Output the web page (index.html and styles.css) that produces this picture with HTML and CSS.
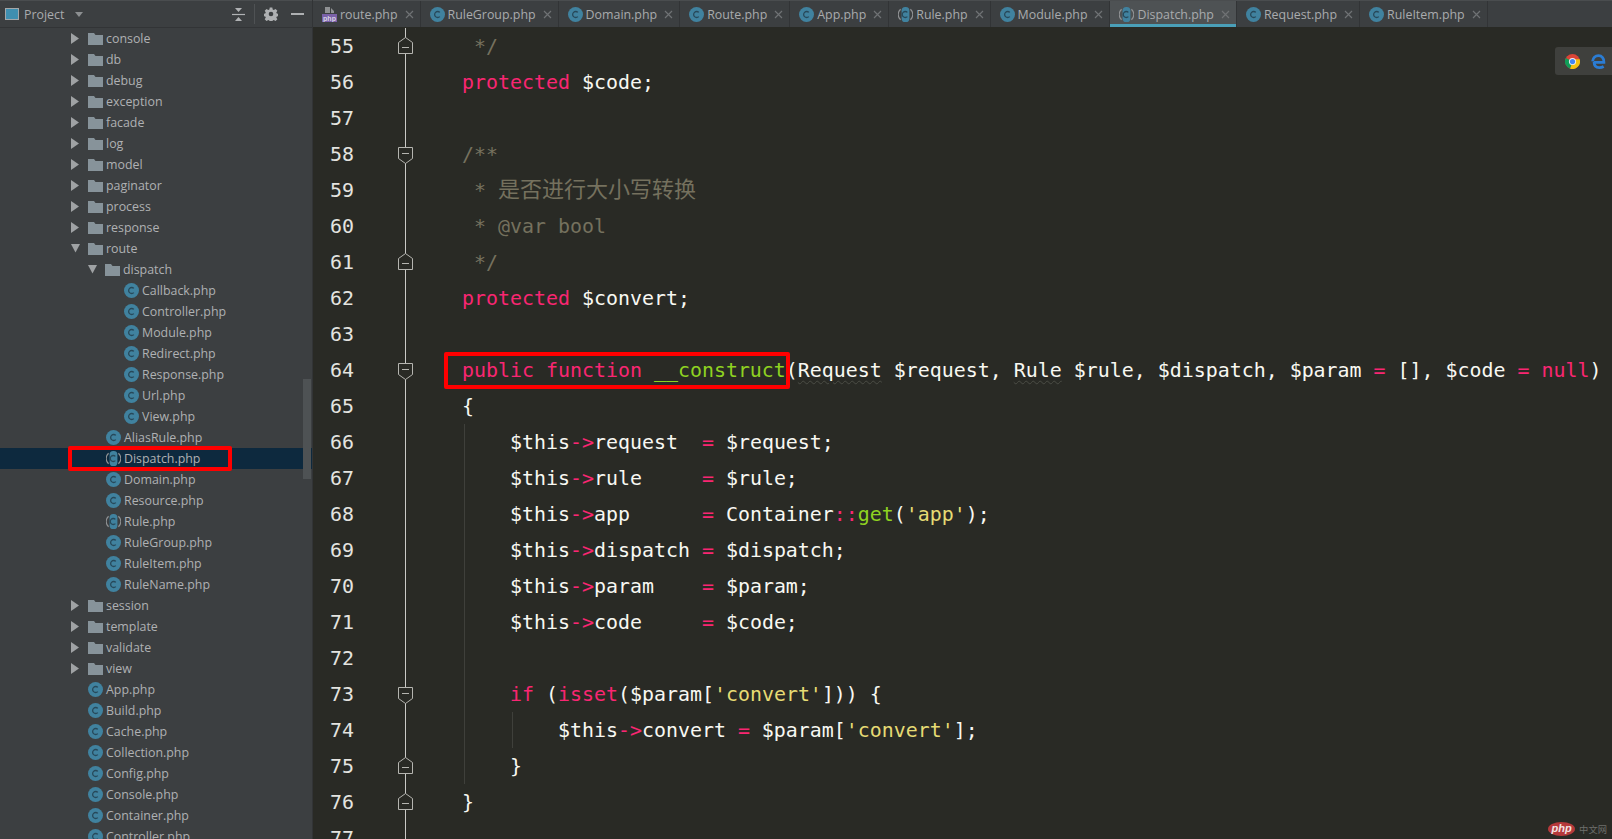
FILE: index.html
```html
<!DOCTYPE html>
<html lang="en">
<head>
<meta charset="utf-8">
<title>Dispatch.php</title>
<link rel="stylesheet" href="styles.css">
</head>
<body>
<svg class="defs" width="0" height="0" aria-hidden="true">
  <symbol id="i-c" viewBox="0 0 15 15"><circle cx="7.5" cy="7.5" r="7.5" fill="#40829f"/><path d="M9.8 5.4A3 3 0 1 0 9.8 9.6" fill="none" stroke="#27495a" stroke-width="1.3"/></symbol>
  <symbol id="i-a" viewBox="0 0 15 15"><path d="M2.6 2.2A7 7 0 0 0 2.6 12.8" fill="none" stroke="#8f9193" stroke-width="1.2"/><path d="M12.4 2.2A7 7 0 0 1 12.4 12.8" fill="none" stroke="#8f9193" stroke-width="1.2"/><rect x="3.6" y="0" width="7.8" height="15" rx="3.6" fill="#40829f"/><path d="M9.4 5.4A3 3 0 1 0 9.4 9.6" fill="none" stroke="#27495a" stroke-width="1.3"/></symbol>
  <symbol id="i-f" viewBox="0 0 15 13"><path d="M0 1h6l1.5 2H15v10H0z" fill="#87939a"/></symbol>
  <symbol id="i-r" viewBox="0 0 9 11"><path d="M0 0l8 5.5L0 11z" fill="#9fa2a4"/></symbol>
  <symbol id="i-d" viewBox="0 0 9 9"><path d="M0 0h9L4.5 8.5z" fill="#9fa2a4"/></symbol>
  <symbol id="i-up" viewBox="0 0 15 17"><path d="M.5 16.5V5.5L7.5.5l7 5v11z" fill="#292a25" stroke="#b5b5b0"/><path d="M4 10.5h7" stroke="#b5b5b0"/></symbol>
  <symbol id="i-dn" viewBox="0 0 15 17"><path d="M.5.5v11l7 5 7-5V.5z" fill="#292a25" stroke="#b5b5b0"/><path d="M4 6.5h7" stroke="#b5b5b0"/></symbol>
  <symbol id="i-x" viewBox="0 0 9 9"><path d="M1 1l7 7M8 1L1 8" stroke="#6f7274" stroke-width="1.2"/></symbol>
</svg>
<div class="ide">
  <aside class="project">
    <header class="project-bar">
      <svg class="pi-window" viewBox="0 0 14 12"><rect x=".5" y=".5" width="13" height="11" fill="#3f8fb0" stroke="#a4a7a9"/></svg>
      <span class="project-title">Project</span>
      <svg class="pi-caret" viewBox="0 0 8 5"><path d="M0 0h8L4 5z" fill="#8c8f91"/></svg>
      <span class="spacer"></span>
      <svg class="pi-collapse" viewBox="0 0 13 13"><path d="M0 6.5h13" stroke="#b0b2b4" stroke-width="1.2"/><path d="M3 0h7L6.5 4zM3 13h7L6.5 9z" fill="#b0b2b4"/></svg>
      <span class="pi-sep"></span>
      <svg class="pi-gear" viewBox="0 0 14 14"><path d="M5.6 0h2.8l.4 2 1.2.6L11.900 1.400l2 2-1.200 1.800.6 1.200 2 .4v2.400l-2 .4-.6 1.200 1.200 1.800-2 2-1.900-1.200-1.200.6-.4 2H5.600l-.4-2-1.200-.6-1.900 1.200-2-2 1.200-1.800-.6-1.200-2-.4V6.800l2-.4.6-1.200L.1 3.400l2-2L4 2.600l1.200-.6z" fill="#aeb0b2" transform="translate(.6 .6) scale(.92)"/><circle cx="7" cy="7" r="2.300" fill="#3c3f41"/></svg>
      <svg class="pi-min" viewBox="0 0 13 2"><rect width="13" height="2" fill="#aeb0b2"/></svg>
    </header>
    <ul class="tree">
      <li class="row d1"><svg class="tw"><use href="#i-r"/></svg><svg class="ic"><use href="#i-f"/></svg><span>console</span></li>
      <li class="row d1"><svg class="tw"><use href="#i-r"/></svg><svg class="ic"><use href="#i-f"/></svg><span>db</span></li>
      <li class="row d1"><svg class="tw"><use href="#i-r"/></svg><svg class="ic"><use href="#i-f"/></svg><span>debug</span></li>
      <li class="row d1"><svg class="tw"><use href="#i-r"/></svg><svg class="ic"><use href="#i-f"/></svg><span>exception</span></li>
      <li class="row d1"><svg class="tw"><use href="#i-r"/></svg><svg class="ic"><use href="#i-f"/></svg><span>facade</span></li>
      <li class="row d1"><svg class="tw"><use href="#i-r"/></svg><svg class="ic"><use href="#i-f"/></svg><span>log</span></li>
      <li class="row d1"><svg class="tw"><use href="#i-r"/></svg><svg class="ic"><use href="#i-f"/></svg><span>model</span></li>
      <li class="row d1"><svg class="tw"><use href="#i-r"/></svg><svg class="ic"><use href="#i-f"/></svg><span>paginator</span></li>
      <li class="row d1"><svg class="tw"><use href="#i-r"/></svg><svg class="ic"><use href="#i-f"/></svg><span>process</span></li>
      <li class="row d1"><svg class="tw"><use href="#i-r"/></svg><svg class="ic"><use href="#i-f"/></svg><span>response</span></li>
      <li class="row d1"><svg class="tw"><use href="#i-d"/></svg><svg class="ic"><use href="#i-f"/></svg><span>route</span></li>
      <li class="row d2"><svg class="tw"><use href="#i-d"/></svg><svg class="ic"><use href="#i-f"/></svg><span>dispatch</span></li>
      <li class="row d3"><svg class="ic"><use href="#i-c"/></svg><span>Callback.php</span></li>
      <li class="row d3"><svg class="ic"><use href="#i-c"/></svg><span>Controller.php</span></li>
      <li class="row d3"><svg class="ic"><use href="#i-c"/></svg><span>Module.php</span></li>
      <li class="row d3"><svg class="ic"><use href="#i-c"/></svg><span>Redirect.php</span></li>
      <li class="row d3"><svg class="ic"><use href="#i-c"/></svg><span>Response.php</span></li>
      <li class="row d3"><svg class="ic"><use href="#i-c"/></svg><span>Url.php</span></li>
      <li class="row d3"><svg class="ic"><use href="#i-c"/></svg><span>View.php</span></li>
      <li class="row d2f"><svg class="ic"><use href="#i-c"/></svg><span>AliasRule.php</span></li>
      <li class="row d2f selected"><svg class="ic"><use href="#i-a"/></svg><span>Dispatch.php</span></li>
      <li class="row d2f"><svg class="ic"><use href="#i-c"/></svg><span>Domain.php</span></li>
      <li class="row d2f"><svg class="ic"><use href="#i-c"/></svg><span>Resource.php</span></li>
      <li class="row d2f"><svg class="ic"><use href="#i-a"/></svg><span>Rule.php</span></li>
      <li class="row d2f"><svg class="ic"><use href="#i-c"/></svg><span>RuleGroup.php</span></li>
      <li class="row d2f"><svg class="ic"><use href="#i-c"/></svg><span>RuleItem.php</span></li>
      <li class="row d2f"><svg class="ic"><use href="#i-c"/></svg><span>RuleName.php</span></li>
      <li class="row d1"><svg class="tw"><use href="#i-r"/></svg><svg class="ic"><use href="#i-f"/></svg><span>session</span></li>
      <li class="row d1"><svg class="tw"><use href="#i-r"/></svg><svg class="ic"><use href="#i-f"/></svg><span>template</span></li>
      <li class="row d1"><svg class="tw"><use href="#i-r"/></svg><svg class="ic"><use href="#i-f"/></svg><span>validate</span></li>
      <li class="row d1"><svg class="tw"><use href="#i-r"/></svg><svg class="ic"><use href="#i-f"/></svg><span>view</span></li>
      <li class="row d1f"><svg class="ic"><use href="#i-c"/></svg><span>App.php</span></li>
      <li class="row d1f"><svg class="ic"><use href="#i-c"/></svg><span>Build.php</span></li>
      <li class="row d1f"><svg class="ic"><use href="#i-c"/></svg><span>Cache.php</span></li>
      <li class="row d1f"><svg class="ic"><use href="#i-c"/></svg><span>Collection.php</span></li>
      <li class="row d1f"><svg class="ic"><use href="#i-c"/></svg><span>Config.php</span></li>
      <li class="row d1f"><svg class="ic"><use href="#i-c"/></svg><span>Console.php</span></li>
      <li class="row d1f"><svg class="ic"><use href="#i-c"/></svg><span>Container.php</span></li>
      <li class="row d1f"><svg class="ic"><use href="#i-c"/></svg><span>Controller.php</span></li>
    </ul>
    <div class="scroll-thumb"></div>
    <div class="mark mark-tree"></div>
  </aside>
  <main class="main">
    <nav class="tabs">
      <div class="tab"><svg class="tab-ic" viewBox="0 0 15 15"><path d="M3 0h5v6H3zM9 1l3 3v2H9z" fill="#8f9193"/><rect y="7" width="15" height="8" fill="#7a61a8"/><text x="7.500" y="13.500" class="php-mini">php</text></svg><span>route.php</span><svg class="tab-x"><use href="#i-x"/></svg></div>
      <div class="tab"><svg class="tab-ic"><use href="#i-c"/></svg><span>RuleGroup.php</span><svg class="tab-x"><use href="#i-x"/></svg></div>
      <div class="tab"><svg class="tab-ic"><use href="#i-c"/></svg><span>Domain.php</span><svg class="tab-x"><use href="#i-x"/></svg></div>
      <div class="tab"><svg class="tab-ic"><use href="#i-c"/></svg><span>Route.php</span><svg class="tab-x"><use href="#i-x"/></svg></div>
      <div class="tab"><svg class="tab-ic"><use href="#i-c"/></svg><span>App.php</span><svg class="tab-x"><use href="#i-x"/></svg></div>
      <div class="tab"><svg class="tab-ic"><use href="#i-a"/></svg><span>Rule.php</span><svg class="tab-x"><use href="#i-x"/></svg></div>
      <div class="tab"><svg class="tab-ic"><use href="#i-c"/></svg><span>Module.php</span><svg class="tab-x"><use href="#i-x"/></svg></div>
      <div class="tab active"><svg class="tab-ic"><use href="#i-a"/></svg><span>Dispatch.php</span><svg class="tab-x"><use href="#i-x"/></svg></div>
      <div class="tab"><svg class="tab-ic"><use href="#i-c"/></svg><span>Request.php</span><svg class="tab-x"><use href="#i-x"/></svg></div>
      <div class="tab"><svg class="tab-ic"><use href="#i-c"/></svg><span>RuleItem.php</span><svg class="tab-x"><use href="#i-x"/></svg></div>
    </nav>
    <section class="editor">
      <div class="line"><span class="num">55</span><span class="fold"><svg class="fold-ic"><use href="#i-up"/></svg></span><code class="src cm"> */</code></div>
      <div class="line"><span class="num">56</span><span class="fold"></span><code class="src"><b class="kw">protected</b> $code;</code></div>
      <div class="line"><span class="num">57</span><span class="fold"></span><code class="src"></code></div>
      <div class="line"><span class="num">58</span><span class="fold"><svg class="fold-ic fold-down"><use href="#i-dn"/></svg></span><code class="src cm">/**</code></div>
      <div class="line"><span class="num">59</span><span class="fold"></span><code class="src cm"> * <span class="cjk">是否进行大小写转换</span></code></div>
      <div class="line"><span class="num">60</span><span class="fold"></span><code class="src cm"> * @var bool</code></div>
      <div class="line"><span class="num">61</span><span class="fold"><svg class="fold-ic"><use href="#i-up"/></svg></span><code class="src cm"> */</code></div>
      <div class="line"><span class="num">62</span><span class="fold"></span><code class="src"><b class="kw">protected</b> $convert;</code></div>
      <div class="line"><span class="num">63</span><span class="fold"></span><code class="src"></code></div>
      <div class="line"><span class="num">64</span><span class="fold"><svg class="fold-ic fold-down"><use href="#i-dn"/></svg></span><code class="src"><b class="kw">public function</b> <b class="fn">__construct</b>(<span class="weak">Request</span> $request, <span class="weak">Rule</span> $rule, $dispatch, $param <b class="kw">=</b> [], $code <b class="kw">=</b> <b class="kw">null</b>)</code></div>
      <div class="line"><span class="num">65</span><span class="fold"></span><code class="src">{</code></div>
      <div class="line"><span class="num">66</span><span class="fold"></span><code class="src g1">    $this<b class="kw">-&gt;</b>request  <b class="kw">=</b> $request;</code></div>
      <div class="line"><span class="num">67</span><span class="fold"></span><code class="src g1">    $this<b class="kw">-&gt;</b>rule     <b class="kw">=</b> $rule;</code></div>
      <div class="line"><span class="num">68</span><span class="fold"></span><code class="src g1">    $this<b class="kw">-&gt;</b>app      <b class="kw">=</b> Container<b class="kw">::</b><b class="fn">get</b>(<b class="str">'app'</b>);</code></div>
      <div class="line"><span class="num">69</span><span class="fold"></span><code class="src g1">    $this<b class="kw">-&gt;</b>dispatch <b class="kw">=</b> $dispatch;</code></div>
      <div class="line"><span class="num">70</span><span class="fold"></span><code class="src g1">    $this<b class="kw">-&gt;</b>param    <b class="kw">=</b> $param;</code></div>
      <div class="line"><span class="num">71</span><span class="fold"></span><code class="src g1">    $this<b class="kw">-&gt;</b>code     <b class="kw">=</b> $code;</code></div>
      <div class="line"><span class="num">72</span><span class="fold"></span><code class="src g1"></code></div>
      <div class="line"><span class="num">73</span><span class="fold"><svg class="fold-ic fold-down"><use href="#i-dn"/></svg></span><code class="src g1">    <b class="kw">if</b> (<b class="kw">isset</b>($param[<b class="str">'convert'</b>])) {</code></div>
      <div class="line"><span class="num">74</span><span class="fold"></span><code class="src g1 g2">        $this<b class="kw">-&gt;</b>convert <b class="kw">=</b> $param[<b class="str">'convert'</b>];</code></div>
      <div class="line"><span class="num">75</span><span class="fold"><svg class="fold-ic"><use href="#i-up"/></svg></span><code class="src g1">    }</code></div>
      <div class="line"><span class="num">76</span><span class="fold"><svg class="fold-ic"><use href="#i-up"/></svg></span><code class="src">}</code></div>
      <div class="line"><span class="num">77</span><span class="fold"></span><code class="src"></code></div>
      <div class="mark mark-code"></div>
      <div class="browsers">
        <svg class="br-ic" viewBox="0 0 16 16"><circle cx="8" cy="8" r="8" fill="#db4437"/><path d="M8 8L.9 4.300A8 8 0 0 0 5.500 15.600z" fill="#0f9d58"/><path d="M8 8l-2.500 7.600A8 8 0 0 0 15.600 5.500H8z" fill="#f4c20d"/><circle cx="8" cy="8" r="3.800" fill="#f2f2f2"/><circle cx="8" cy="8" r="2.800" fill="#4285f4"/></svg>
        <svg class="br-ic" viewBox="0 0 16 16"><path d="M3 9h10.800c.4-4.200-2.300-7.300-5.800-7.300C4.500 1.700 2 4.500 1.700 7.900M3.300 8.500c0 4 2.300 6 5.500 6 1.900 0 3.400-.4 4.700-1.200" fill="none" stroke="#2b7cd3" stroke-width="3"/></svg>
      </div>
      <div class="watermark"><span class="wm-logo">php</span><span class="wm-text">中文网</span></div>
    </section>
  </main>
</div>
</body>
</html>
```
FILE: styles.css
```css
* { box-sizing: border-box; }
html, body { margin: 0; height: 100%; overflow: hidden; background: #292a25; }
.defs { position: absolute; }
.ide { display: flex; height: 839px; font-family: "Open Sans", "Noto Sans", sans-serif; font-size: 12.4px; color: #afb1b3; }

.project { position: relative; flex: 0 0 313px; background: #3c3f41; border-right: 1px solid #323436; overflow: hidden; }
.project-bar { display: flex; align-items: center; height: 28px; padding: 0 8px 0 5px; border-top: 1px solid #4a4d4f; border-bottom: 1px solid #323436; }
.pi-window { width: 14px; height: 12px; margin-right: 5px; }
.project-title { color: #a9abad; }
.pi-caret { width: 8px; height: 5px; margin-left: 11px; }
.spacer { flex: 1; }
.pi-collapse { width: 13px; height: 13px; }
.pi-sep { width: 1px; height: 20px; background: #4f5254; margin: 0 9px; }
.pi-gear { width: 14px; height: 14px; margin-right: 13px; }
.pi-min { width: 13px; height: 2px; }

.tree { list-style: none; margin: 0; padding: 0; }
.row { display: flex; align-items: center; height: 21px; white-space: nowrap; }
.row span { margin-top: -1px; }
.d1 { padding-left: 71px; }
.d2 { padding-left: 88px; }
.d1f { padding-left: 88px; }
.d2f { padding-left: 106px; }
.d3 { padding-left: 124px; }
.selected { background: #0d293e; }
.tw { width: 9px; height: 11px; margin-right: 8px; }
.ic { width: 15px; height: 15px; margin-right: 3px; flex: none; }
.scroll-thumb { position: absolute; left: 303px; top: 379px; width: 8px; height: 100px; background: #4e5254; }
.mark { position: absolute; border: 4px solid #f00; border-radius: 2px; pointer-events: none; }
.mark-tree { left: 68px; top: 446px; width: 164px; height: 25px; }

.main { flex: 1; min-width: 0; display: flex; flex-direction: column; }
.tabs { display: flex; height: 27px; background: #3c3f41; border-top: 1px solid #4a4d4f; flex: none; }
.tab { display: flex; align-items: center; height: 26px; padding: 0 6px 0 9px; border-right: 1px solid #323436; white-space: nowrap; color: #a9abad; }
.tab span { margin-left: 3px; }
.tab-ic { width: 15px; height: 15px; flex: none; }
.tab-x { width: 9px; height: 9px; margin-left: 7px; flex: none; }
.tab.active { background: #4e5254; box-shadow: inset 0 -3px 0 #4a9fb8; }
.php-mini { font-family: "Liberation Sans", sans-serif; font-size: 7px; font-weight: 700; fill: #d9d4e6; text-anchor: middle; }

.editor { position: relative; flex: 1; overflow: hidden; background: #292a25; padding-top: 1px; }
.line { display: flex; height: 36px; align-items: center; font-family: "DejaVu Sans Mono", monospace; font-size: 19.93px; }
.num { flex: none; width: 67px; padding-left: 17px; color: #e4e4e0; }
.fold { position: relative; align-self: stretch; flex: none; width: 82px; display: flex; align-items: center; }
.fold::before { content: ""; position: absolute; left: 25px; top: 0; bottom: 0; width: 1px; background: #c9c9c6; }
.fold-ic { position: relative; left: 18px; top: -1px; width: 15px; height: 17px; }
.fold-down { top: 1px; }
.src { position: relative; display: block; align-self: stretch; flex: 1; padding-top: 1px; font: inherit; line-height: 36px; white-space: pre; color: #f8f8f2; }
.src b { font-weight: 400; }
.kw { color: #f92672; }
.fn { color: #8fd221; }
.str { color: #e6db74; }
.cm { color: #75715e; }
.cjk { font-family: "Noto Sans CJK SC", sans-serif; font-size: 22px; line-height: 20px; }
.weak { text-decoration: underline wavy #4a4b44 1px; text-underline-offset: 3px; }
.g1::before, .g2::after { content: ""; position: absolute; top: 0; bottom: 0; width: 1px; background: #3f403b; }
.g1::before { left: 2px; }
.g2::after { left: 50px; }
.mark-code { left: 131px; top: 325px; width: 346px; height: 37px; }

.browsers { position: absolute; top: 20px; left: 1242px; width: 57px; height: 28px; padding-left: 10px; display: flex; align-items: center; gap: 11px; background: #3f403d; border-radius: 3px 0 0 3px; }
.br-ic { width: 15px; height: 15px; flex: none; }
.watermark { position: absolute; right: 5px; bottom: 3px; display: flex; align-items: center; gap: 4px; }
.wm-logo { width: 27px; height: 14px; border-radius: 50%; background: #b5393b; color: #f3e3e3; font: italic 700 11px/13px "Liberation Sans", sans-serif; text-align: center; }
.wm-text { font: 9.300px/14px "Noto Sans CJK SC", sans-serif; color: #6e6f6c; }
```
